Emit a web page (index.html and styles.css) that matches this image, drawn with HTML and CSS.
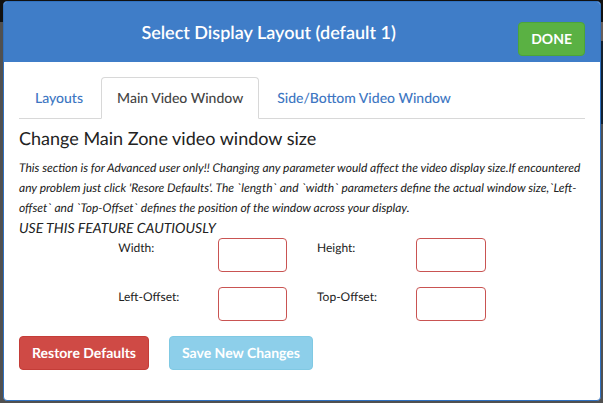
FILE: index.html
```
<!DOCTYPE html>
<html lang="en">
<head>
<meta charset="utf-8">
<title>Select Display Layout</title>
<link rel="stylesheet" href="styles.css">
</head>
<body>
<section class="modal" role="dialog" aria-labelledby="title">
  <header class="modal-header">
    <h1 class="modal-title" id="title">Select Display Layout (default 1)</h1>
    <button class="btn btn-done" type="button">DONE</button>
  </header>
  <div class="modal-body">
    <nav class="tabs">
      <a class="tab" href="#layouts">Layouts</a>
      <a class="tab active" href="#main" aria-current="page">Main Video Window</a>
      <a class="tab" href="#side">Side/Bottom Video Window</a>
    </nav>
    <h2 class="heading">Change Main Zone video window size</h2>
    <p class="note">This section is for Advanced user only!! Changing any parameter would affect the video display size.If encountered any problem just click 'Resore Defaults'. The `length` and `width` parameters define the actual window size,`Left-offset` and `Top-Offset` defines the position of the window across your display.</p>
    <p class="caution">USE THIS FEATURE CAUTIOUSLY</p>
    <form>
      <div class="fields">
        <label class="first" for="width">Width:</label>
        <input id="width" type="text">
        <label for="height">Height:</label>
        <input id="height" type="text">
        <label class="first" for="left">Left-Offset:</label>
        <input id="left" type="text">
        <label for="top">Top-Offset:</label>
        <input id="top" type="text">
      </div>
      <div class="actions">
        <button class="btn btn-danger" type="button">Restore Defaults</button>
        <button class="btn btn-info" type="button" disabled>Save New Changes</button>
      </div>
    </form>
  </div>
</section>
</body>
</html>
```
FILE: styles.css
```
* {
  box-sizing: border-box;
}

body {
  margin: 0;
  padding: 1px 2px 2px 3px;
  min-height: 100vh;
  display: flex;
  font-family: Lato, "Liberation Sans", sans-serif;
  font-size: 14px;
  line-height: 20px;
  text-rendering: geometricPrecision;
  color: #222;
  background:
    linear-gradient(#111 22px, #675d59 22px 41px, #14212f 41px 124px, #505050 124px) right / 50% 100% no-repeat,
    linear-gradient(#111 22px, #505050 22px);
}

.modal {
  flex: 1;
  background: #fff;
  border: 1px solid #3071c0;
  border-radius: 4px;
  overflow: hidden;
}

.modal-header {
  display: flex;
  align-items: flex-start;
  padding: 20px 15px 6px;
  background: #3f7dc8;
  color: #fff;
}

.modal-title {
  flex: 1;
  margin: 0;
  font-size: 18px;
  line-height: 20px;
  font-weight: 600;
  text-align: center;
}

.btn {
  height: 34px;
  padding: 0 12px;
  border: 1px solid;
  border-radius: 4px;
  font: bold 14px/20px Lato, "Liberation Sans", sans-serif;
  text-rendering: inherit;
  color: #fff;
}

.btn-done {
  background: #5ab143;
  border-color: #4ca538;
}

.btn-danger {
  background: #cf4a45;
  border-color: #c43d38;
}

.btn-info {
  background: #8dcfea;
  border-color: #80c9e3;
}

.modal-body {
  padding: 15px;
}

.tabs {
  display: flex;
  gap: 2px;
  border-bottom: 1px solid #d8d8d8;
}

.tab {
  padding: 10px 15px;
  margin-bottom: -1px;
  border: 1px solid transparent;
  border-radius: 4px 4px 0 0;
  font-weight: 500;
  color: #3d76c2;
  text-decoration: none;
}

.tab.active {
  color: #444;
  background: #fff;
  border-color: #d8d8d8;
  border-bottom-color: #fff;
}

.heading {
  margin: 9px 0 10px;
  font-size: 18px;
  line-height: 20px;
  font-weight: 400;
}

.note,
.caution {
  margin: 0;
  font-style: italic;
}

.note {
  font-size: 12px;
}

.fields {
  display: grid;
  grid-template-columns: repeat(6, 1fr);
  row-gap: 15px;
  margin: 0 -15px;
}

.fields label {
  padding-left: 15px;
  font-size: 12px;
}

.fields .first {
  grid-column-start: 2;
}

.fields input {
  width: calc(100% - 30px);
  height: 34px;
  margin-left: 15px;
  padding: 6px;
  border: 1px solid #c95452;
  border-radius: 4px;
}

.actions {
  display: flex;
  gap: 20px;
  margin-top: 15px;
}
```
